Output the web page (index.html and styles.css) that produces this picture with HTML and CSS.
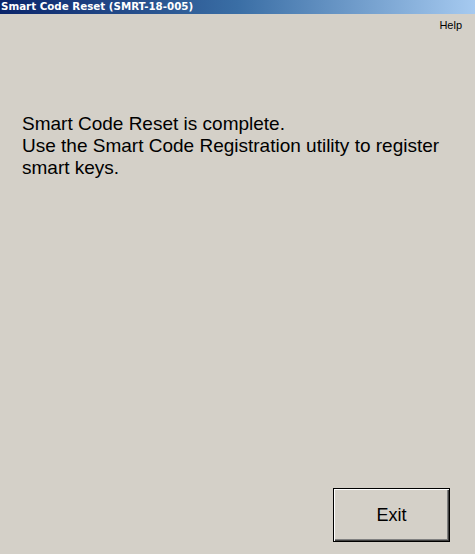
FILE: index.html
```html
<!DOCTYPE html>
<html>
<head>
<meta charset="utf-8">
<title>Smart Code Reset</title>
<link rel="stylesheet" href="styles.css">
</head>
<body>
<div class="window">
  <div class="titlebar">Smart Code Reset (SMRT-18-005)</div>
  <div class="menu"><span class="help">Help</span></div>
  <div class="content">
    <p class="message">Smart Code Reset is complete.<br>Use the Smart Code Registration utility to register smart keys.</p>
  </div>
  <div class="footer">
    <button class="exit">Exit</button>
  </div>
</div>
</body>
</html>
```
FILE: styles.css
```css
html, body {
  margin: 0;
  padding: 0;
  width: 475px;
  height: 554px;
  overflow: hidden;
  background: #d4d0c8;
}
.window {
  width: 475px;
  height: 554px;
  display: flex;
  flex-direction: column;
  background: #d4d0c8;
}
.titlebar {
  height: 14px;
  line-height: 13px;
  padding-left: 1px;
  background: linear-gradient(to right, #0a246a 0%, #3a6ea5 50%, #a6caf0 100%);
  color: #fff;
  font-family: "DejaVu Sans", Tahoma, sans-serif;
  font-weight: bold;
  font-size: 10.3px;
  white-space: nowrap;
  overflow: hidden;
}
.menu {
  display: flex;
  justify-content: flex-end;
  padding: 5px 13px 0 0;
  height: 14px;
}
.help {
  font-family: "Liberation Sans", Arial, sans-serif;
  font-size: 11px;
  color: #000;
}
.content {
  flex: 1;
  padding: 80px 20px 0 22px;
}
.message {
  margin: 0;
  font-family: "Liberation Sans", Arial, sans-serif;
  font-size: 19px;
  line-height: 22px;
  color: #000;
  width: 430px;
}
.footer {
  display: flex;
  justify-content: flex-end;
  padding: 0 25px 12px 0;
}
.exit {
  width: 117px;
  height: 54px;
  margin: 0;
  padding: 0;
  background: #d4d0c8;
  border: 1px solid #000;
  box-shadow: inset 1px 1px 0 #ffffff, inset -1px -1px 0 #404040, inset -2px -2px 0 #808080;
  font-family: "Liberation Sans", Arial, sans-serif;
  font-size: 18px;
  color: #000;
}
```
